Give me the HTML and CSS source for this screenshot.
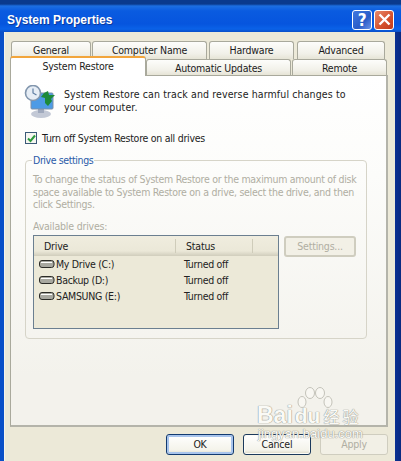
FILE: index.html
```html
<!DOCTYPE html>
<html>
<head>
    <meta charset="UTF-8">
    <title>System Properties</title>
    <link rel="stylesheet" href="styles.css">
</head>
<body>

<div class="window">
    <div class="titlebar">
        <span class="title">System Properties</span>
        <span class="capbtn help">?</span>
        <span class="capbtn close">
            <svg width="17" height="17" viewBox="0 0 17 17"><path d="M3.5 3.5 L13.5 13.5 M13.5 3.5 L3.5 13.5" stroke="#fff" stroke-width="2.4" fill="none"/></svg>
        </span>
    </div>
    <div class="client">
        <div class="tabs row1">
            <span class="tab t-general">General</span>
            <span class="tab t-computer">Computer Name</span>
            <span class="tab t-hardware">Hardware</span>
            <span class="tab t-advanced">Advanced</span>
        </div>
        <div class="tabs row2">
            <span class="tab on t-restore">System Restore</span>
            <span class="tab t-updates">Automatic Updates</span>
            <span class="tab t-remote">Remote</span>
        </div>
        <div class="page">
            <div class="intro">
                <svg class="restore-icon" width="34" height="34" viewBox="0 0 34 34">
                    <ellipse cx="17" cy="29" rx="10" ry="4" fill="#c3c9d6"/>
                    <path d="M14 22h6v6h-6z" fill="#9fa9bd"/>
                    <rect x="7" y="8" width="22" height="16" rx="1" fill="#4d9be6" stroke="#7d8fa8"/>
                    <circle cx="9" cy="8" r="7.5" fill="#e6edf5" stroke="#8296ad" stroke-width="1.6"/>
                    <path d="M9 3.5V8l3.5 2" stroke="#5f7ea3" stroke-width="1.2" fill="none"/>
                    <path d="M20 8l4-2 1 4 6 0-4 4 1 2-4 5-3-3 0-5-4-1z" fill="#1d8a3a"/>
                </svg>
                <p class="intro-text">System Restore can track and reverse harmful changes to your computer.</p>
            </div>
            <label class="check">
                <span class="box">
                    <svg width="9" height="9" viewBox="0 0 9 9"><path d="M1 4.5 L3.5 7 L8 1.5" stroke="#2c9a3c" stroke-width="2" fill="none"/></svg>
                </span>
                Turn off System Restore on all drives
            </label>
            <fieldset class="settings">
                <legend>Drive settings</legend>
                <p class="desc">To change the status of System Restore or the maximum amount of disk<br>space available to System Restore on a drive, select the drive, and then<br>click Settings.</p>
                <div class="avail">Available drives:</div>
                <div class="drives-row">
                    <div class="list">
                        <div class="list-head">
                            <span class="col-drive">Drive</span>
                            <span class="col-status">Status</span>
                            <span class="col-rest"></span>
                        </div>
                        <div class="item">
                            <span class="name"><svg class="hd" width="16" height="10" viewBox="0 0 16 10"><rect x="0.5" y="1.5" width="14.5" height="7" rx="2.5" fill="#a8a8a0" stroke="#2b2b27"/><path d="M2 3.5h11" stroke="#fff"/></svg>My Drive (C:)</span>
                            <span class="state">Turned off</span>
                        </div>
                        <div class="item">
                            <span class="name"><svg class="hd" width="16" height="10" viewBox="0 0 16 10"><rect x="0.5" y="1.5" width="14.5" height="7" rx="2.5" fill="#a8a8a0" stroke="#2b2b27"/><path d="M2 3.5h11" stroke="#fff"/></svg>Backup (D:)</span>
                            <span class="state">Turned off</span>
                        </div>
                        <div class="item">
                            <span class="name"><svg class="hd" width="16" height="10" viewBox="0 0 16 10"><rect x="0.5" y="1.5" width="14.5" height="7" rx="2.5" fill="#a8a8a0" stroke="#2b2b27"/><path d="M2 3.5h11" stroke="#fff"/></svg>SAMSUNG (E:)</span>
                            <span class="state">Turned off</span>
                        </div>
                    </div>
                    <span class="btn disabled small">Settings...</span>
                </div>
            </fieldset>
        </div>
        <div class="buttons">
            <span class="btn default">OK</span>
            <span class="btn">Cancel</span>
            <span class="btn disabled">Apply</span>
        </div>
    </div>

    <div class="watermark">
        <svg class="paw" width="36" height="24" viewBox="0 0 36 24">
            <ellipse cx="5" cy="15" rx="4" ry="5.5" fill="#f8f7f2" stroke="#c4c3ba"/>
            <ellipse cx="13" cy="6" rx="4.5" ry="5.5" fill="#f8f7f2" stroke="#c4c3ba"/>
            <ellipse cx="23" cy="6" rx="4.5" ry="5.5" fill="#f8f7f2" stroke="#c4c3ba"/>
            <ellipse cx="31" cy="15" rx="4" ry="5.5" fill="#f8f7f2" stroke="#c4c3ba"/>
        </svg>
        <div class="wm-brand">Bai<span class="wm-du">du</span><span class="wm-cn">经验</span></div>
        <div class="wm-url">jingyan.baidu.com</div>
    </div>
</div>
</body>
</html>
```

FILE: styles.css
```css
body,div,p,fieldset,legend{margin:0;padding:0;}
body {
    width: 401px;
    height: 461px;
    overflow: hidden;
    font-family: "DejaVu Sans Condensed", "Liberation Sans", Arial, sans-serif;
    font-size: 10.5px;
    letter-spacing: -0.2px;
    color: #1c1c1c;
}
.window {
    width: 401px;
    height: 461px;
    position: relative;
    display: flex;
    flex-direction: column;
    background: linear-gradient(90deg, #0a50c8 0, #0a50c8 200px, #0a2f90 396px, #0a2a80 401px);
}

/* title bar */
.titlebar {
    height: 32px;
    flex: none;
    display: flex;
    align-items: center;
    padding: 7px 7px 0 7px;
    box-sizing: border-box;
    background: linear-gradient(#0a3a8c 0, #0a3a8c 4px, #1c6fe2 6px, #0a5be0 11px, #0655de 24px, #0a62e8 29px, #0a4fc8 32px);
}
.title {
    flex: 1;
    padding-top: 1px;
    color: #fff;
    font-family: "Liberation Sans", Arial, sans-serif;
    font-weight: bold;
    font-size: 12px;
    letter-spacing: 0;
    text-shadow: 1px 1px 0 #0a3a9c;
}
.capbtn {
    width: 18px;
    height: 18px;
    border: 1px solid #fff;
    border-radius: 3px;
    display: flex;
    align-items: center;
    justify-content: center;
    box-sizing: content-box;
}
.help {
    background: linear-gradient(135deg, #3f78e0, #2a5cc8 60%, #6b94e8);
    color: #fff;
    font-weight: bold;
    font-size: 17px;
    margin-right: 2px;
}
.close {
    background: linear-gradient(135deg, #e88a6c, #d4502c 60%, #c03a1c);
}

/* dialog body */
.client {
    flex: 1;
    margin: 0 6px 0 4px;
    padding: 9px 8px 0 6px;
    background: #ece9d8;
    display: flex;
    flex-direction: column;
    box-shadow: inset 1px 0 0 #f5f4ec;
}

/* tabs */
.tabs {
    display: flex;
    position: relative;
}
.row1 {
    height: 18px;
    padding-left: 1px;
}
.row2 {
    height: 16px;
    z-index: 1;
}
.tab {
    box-sizing: border-box;
    text-align: center;
    border: 1px solid #a9a99c;
    border-bottom: none;
    border-radius: 3px 3px 0 0;
    background: linear-gradient(#fdfdfb, #f1f0e8 70%, #e6e4d6);
    line-height: 16px;
    height: 100%;
}
.t-general { width: 80px; margin-right: 1px; }
.t-computer { width: 115px; margin-right: 2px; }
.t-hardware { width: 85px; margin-right: 3px; }
.t-advanced { width: 88px; }
.t-restore { width: 136px; }
.t-updates { width: 145px; margin-right: 1px; }
.t-remote { width: 95px; }
.tab.on {
    height: 20px;
    margin-top: -3px;
    background: #fff;
    border-top: 2px solid #f2a53c;
    line-height: 16px;
    position: relative;
    z-index: 2;
}

/* page */
.page {
    box-sizing: border-box;
    width: 378px;
    height: 352px;
    flex: none;
    border: 1px solid #a9a99c;
    border-right-width: 2px;
    border-bottom-width: 2px;
    border-right-color: #b4b4aa;
    border-bottom-color: #b4b4aa;
    background: linear-gradient(#fff 0, #fcfcfa 100px, #f3f2ec 300px);
    padding: 9px 19px 0 13px;
}
.intro {
    display: flex;
    height: 44px;
}
.restore-icon {
    flex: none;
    margin-right: 6px;
}
.intro-text {
    width: 295px;
    line-height: 13px;
    padding-top: 3px;
    letter-spacing: 0.12px;
}
.check {
    display: flex;
    align-items: center;
    height: 14px;
    margin-top: 2px;
    letter-spacing: -0.27px;
}
.box {
    box-sizing: border-box;
    width: 12px;
    height: 12px;
    margin: 0 5px 0 1px;
    border: 1px solid #3b5a78;
    background: #f6f6f0;
    display: flex;
    align-items: center;
    justify-content: center;
}

/* group box */
.settings {
    box-sizing: border-box;
    width: 342px;
    min-width: 0;
    height: 185px;
    margin: 9px 0 0 1px;
    border: 1px solid #d6d4c8;
    border-radius: 4px;
    padding: 0 8px 0 7px;
}
.settings legend {
    color: #2a5aa8;
    padding: 0 1px;
    margin-left: -1px;
    line-height: 13px;
    letter-spacing: -0.4px;
}
.desc {
    color: #b0aea2;
    line-height: 12.5px;
    margin-top: 6px;
    white-space: nowrap;
    letter-spacing: -0.28px;
}
.avail {
    color: #b0aea2;
    margin-top: 9px;
    line-height: 13px;
}
.drives-row {
    display: flex;
    align-items: flex-start;
    margin-top: 2px;
}
.list {
    box-sizing: border-box;
    width: 246px;
    height: 94px;
    flex: none;
    border: 1px solid #6b7f90;
    background: #ece9d8;
    margin-right: 5px;
}
.list-head {
    display: flex;
    height: 20px;
    background: linear-gradient(#f0eddf, #ebe8d8 75%, #d0cdbc);
}
.list-head span {
    box-sizing: border-box;
    border-right: 1px solid #cfccba;
    height: 14px;
    margin-top: 3px;
    line-height: 14px;
}
.col-drive { width: 142px; padding-left: 10px; }
.col-status { width: 77px; padding-left: 10px; }
.col-rest { width: 25px; border-right: none !important; }
.item {
    display: flex;
    height: 16px;
    line-height: 16px;
    color: #222;
    letter-spacing: -0.3px;
}
.name {
    width: 150px;
    padding-left: 5px;
    box-sizing: border-box;
    display: flex;
    align-items: center;
}
.hd { margin-right: 1px; flex: none; }

/* buttons */
.btn {
    box-sizing: border-box;
    display: block;
    width: 68px;
    height: 21px;
    line-height: 19px;
    text-align: center;
    border: 1px solid #1c3a5c;
    border-radius: 3px;
    background: linear-gradient(#fff, #f4f3ea 80%, #dcd8c6);
    box-shadow: inset 0 0 0 1px #fbfbf6;
}
.btn.default {
    border-color: #123a70;
    box-shadow: inset 0 0 0 2px #a8c4ec;
}
.btn.disabled {
    border-color: #cfcdbf;
    color: #b0aea2;
    background: #f2f0e6;
    box-shadow: none;
}
.btn.small {
    width: 72px;
    flex: none;
    margin-top: 1px;
    border-width: 2px;
    line-height: 17px;
}
.buttons {
    display: flex;
    justify-content: flex-end;
    gap: 9px;
    margin-top: 7px;
    margin-right: -1px;
}

/* watermark sits over the dialog */
.watermark {
    position: absolute;
    left: 256px;
    top: 385px;
    width: 116px;
    height: 50px;
    color: #fafaf6;
    font-family: "Liberation Sans", Arial, sans-serif;
    letter-spacing: 0;
    text-shadow: 0 0 1px #8f8e86, 0 0 1px #8f8e86;
}
.paw {
    position: absolute;
    left: 41px;
    top: 2px;
}
.wm-brand {
    position: absolute;
    left: 1px;
    top: 18px;
    font-size: 23px;
    line-height: 24px;
    font-weight: bold;
    white-space: nowrap;
}
.wm-du {
    font-size: 21px;
    margin: 0 3px 0 2px;
}
.wm-cn {
    font-family: "Noto Sans CJK SC", sans-serif;
    font-size: 16px;
    letter-spacing: 3px;
    font-weight: normal;
}
.wm-url {
    position: absolute;
    left: 2px;
    top: 42px;
    font-size: 13px;
    line-height: 14px;
    white-space: nowrap;
}
```
